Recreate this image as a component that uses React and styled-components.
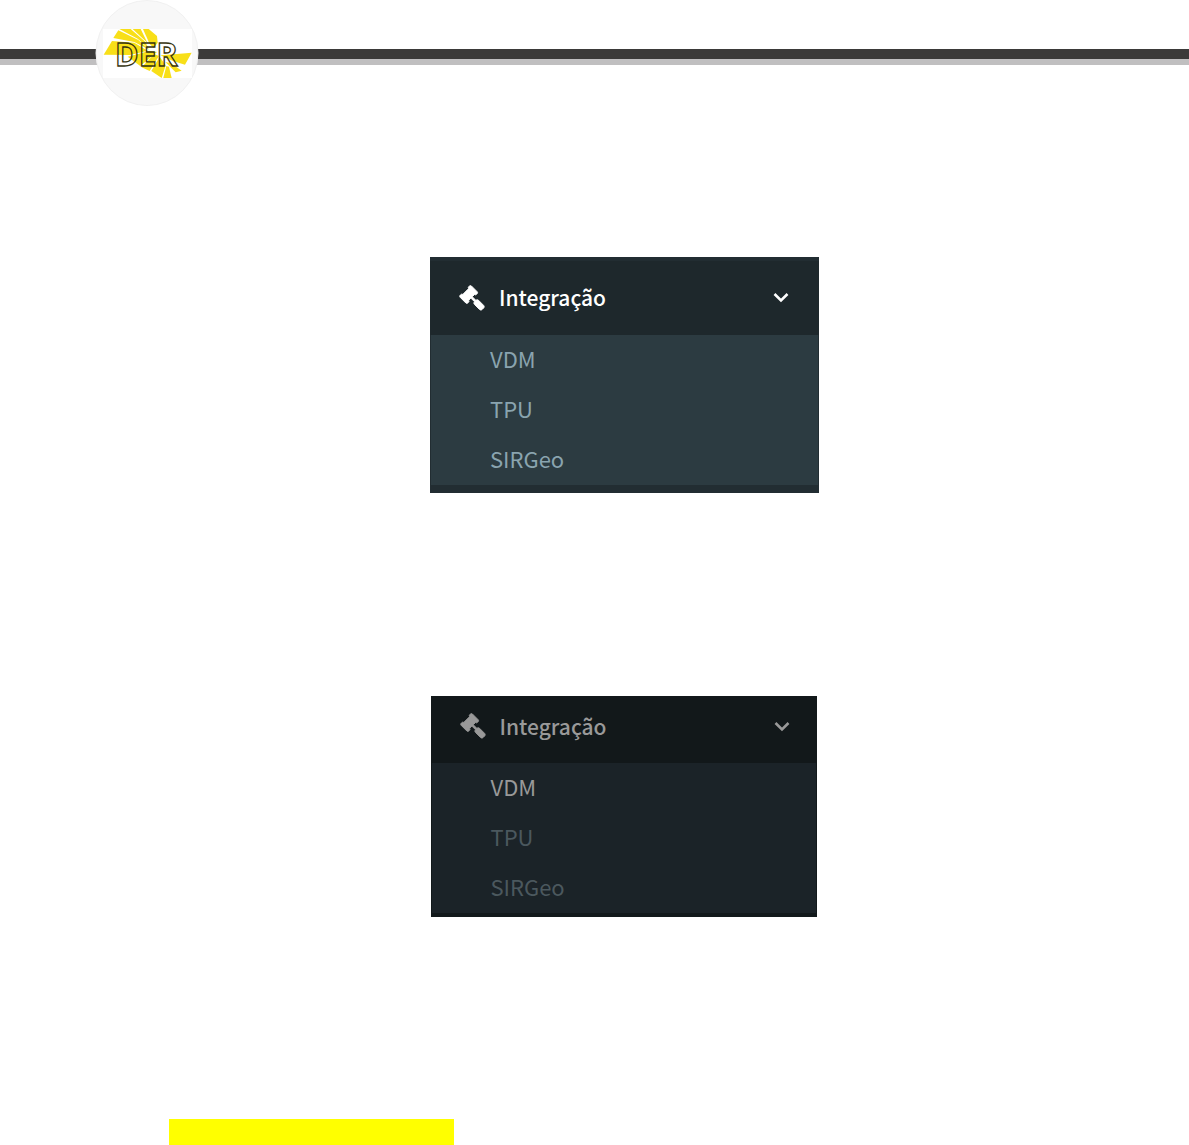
import React, { useState } from "react";
import styled, { createGlobalStyle } from "styled-components";

const GlobalStyle = createGlobalStyle`
  body {
    margin: 0;
    background: #fff;
    font-family: "Noto Sans CJK JP", "Open Sans", sans-serif;
  }
`;

const themes = {
  normal: {
    edge: "#222d32", header: "#1e282c", title: "#ffffff",
    panel: "#2c3b41", item: "#8aa4af", active: "#8aa4af",
  },
  dimmed: {
    edge: "#12191b", header: "#12181a", title: "#999999",
    panel: "#1b2328", item: "#4b585e", active: "#999999",
  },
};

const Header = styled.header`
  display: flex;
  height: 106px;
  padding-left: 95px;
  background: linear-gradient(#fff 49px, #3b3a39 49px, #3b3a39 59px, #c0bfc0 59px, #c0bfc0 65px, #fff 65px);
`;

const Logo = styled.svg`
  width: 104px;
  height: 106px;
`;

const LogoText = styled.text`
  font-family: "Open Sans", "Noto Sans", sans-serif;
  font-size: 32px;
  font-weight: 700;
  fill: none;
  stroke: #37340f;
  stroke-width: 1.3px;
`;

const Main = styled.main`
  display: flex;
  flex-direction: column;
  align-items: center;
  padding-top: 151px;
`;

const Menu = styled.nav`
  box-sizing: border-box;
  width: ${(p) => p.$width}px;
  margin: 0 0 ${(p) => p.$after}px ${(p) => p.$indent}px;
  padding-top: ${(p) => p.$top}px;
  padding-bottom: ${(p) => p.$bottom}px;
  background: ${(p) => p.$tone.edge};
`;

const MenuButton = styled.button`
  display: flex;
  align-items: center;
  width: 100%;
  height: ${(p) => p.$height}px;
  padding: 0 ${(p) => p.$side}px ${(p) => p.$lift}px 29px;
  border: 0;
  background: ${(p) => p.$tone.header};
  color: ${(p) => p.$tone.title};
  font: 500 21px/32px "Noto Sans CJK JP", "Open Sans", sans-serif;
  text-align: left;
  cursor: pointer;
`;

const Title = styled.span`
  flex: 1;
  margin-left: 13px;
  padding-bottom: 2px;
`;

const Items = styled.ul`
  margin: 0 1px;
  padding: 0;
  list-style: none;
  background: ${(p) => p.$tone.panel};
`;

const ItemLink = styled.a`
  display: block;
  padding: 0 0 4px 59px;
  color: ${(p) => (p.$active ? p.$tone.active : p.$tone.item)};
  font-size: 22px;
  line-height: 46px;
  text-decoration: none;
`;

const Highlight = styled.div`
  width: 285px;
  height: 26px;
  margin-left: 169px;
  background: #ffff00;
`;

function GavelIcon() {
  return (
    <svg width="27" height="27" viewBox="-10 0 1912 1912" fill="currentColor" stroke="currentColor" strokeWidth="70" strokeLinejoin="round" aria-hidden="true">
      <path d="M1771 1536q0 53-37 90l-107 108q-39 37-91 37-53 0-90-37l-363-364q-38-36-38-90 0-53 43-96l-256-256-126 126q-14 14-34 14t-34-14q2 2 12.5 12t12.5 13 10 11.5 10 13.5 6 13.5 5.5 16.5 1.5 18q0 38-28 68-3 3-16.5 18t-19 20.5-18.5 16.5-22 15.5-22 9-26 4.5q-40 0-68-28l-408-408q-28-28-28-68 0-13 4.5-26t9-22 15.5-22 16.5-18.5 20.5-19 18-16.5q30-28 68-28 10 0 18 1.5t16.5 5.5 13.5 6 13.5 10 11.5 10 13 12.5 12 12.5q-14-14-14-34t14-34l348-348q14-14 34-14t34 14q-2-2-12.5-12t-12.5-13-10-11.5-10-13.5-6-13.5-5.5-16.5-1.5-18q0-38 28-68 3-3 16.5-18t19-20.5 18.5-16.5 22-15.5 22-9 26-4.5q40 0 68 28l408 408q28 28 28 68 0 13-4.5 26t-9 22-15.5 22-16.5 18.5-20.5 19-18 16.5q-30 28-68 28-10 0-18-1.5t-16.5-5.5-13.5-6-13.5-10-11.5-10-13-12.5-12-12.5q14 14 14 34t-14 34l-126 126 256 256q43-43 96-43 52 0 91 37l363 363q37 39 37 91z" />
    </svg>
  );
}

function ChevronIcon() {
  return (
    <svg width="16" height="12" viewBox="0 0 16 12" fill="none" stroke="currentColor" strokeWidth="2.6" aria-hidden="true">
      <path d="M1.5 2 8 8.4 14.5 2" />
    </svg>
  );
}

function SideMenu({ tone, active, width, indent, top, bottom, height, side, lift, after }) {
  const [open, setOpen] = useState(true);
  return (
    <Menu $tone={tone} $width={width} $indent={indent} $top={top} $bottom={bottom} $after={after} aria-label="Integração">
      <MenuButton
        type="button"
        aria-expanded={open}
        onClick={() => setOpen(!open)}
        $tone={tone}
        $height={height}
        $side={side}
        $lift={lift}
      >
        <GavelIcon />
        <Title>Integração</Title>
        <ChevronIcon />
      </MenuButton>
      {open && (
        <Items $tone={tone}>
          {["VDM", "TPU", "SIRGeo"].map((name) => (
            <li key={name}>
              <ItemLink href={`#${name}`} $tone={tone} $active={name === active}>{name}</ItemLink>
            </li>
          ))}
        </Items>
      )}
    </Menu>
  );
}

export default function App() {
  return (
    <>
      <GlobalStyle />
      <Header>
        <Logo viewBox="95 0 104 106" role="img" aria-label="DER">
          <ellipse cx="147" cy="53" rx="51" ry="52.5" fill="#f8f8f8" stroke="#f1f1f1" />
          <path d="M103 29H192V78H103Z" fill="#fff" />
          <g fill="#f8df18" transform="translate(97 22) scale(0.3333)">
            <path d="M20 98 45 57 112 62 152 86 100 99Z" />
            <path d="M49 48 64 25 124 54 158 84 112 60Z" />
            <path d="M67 21H101L143 58 156 80 122 50Z" />
            <path d="M107 21H131L153 66 146 58Z" />
            <path d="M138 21H155L180 42 182 62 170 78 158 66Z" />
            <path d="M92 104 156 87 180 90 130 132Z" />
            <path d="M134 136 172 96 186 102 158 147Z" />
            <path d="M163 147 188 104 206 130 194 168Z" />
            <path d="M208 132 216 134 224 168H199Z" />
            <path d="M205 120 222 124 254 146 236 151Z" />
            <path d="M190 100 240 96 284 92 264 128 228 117Z" />
          </g>
          <LogoText x="115" y="66">DER</LogoText>
        </Logo>
      </Header>
      <Main>
        <SideMenu tone={themes.normal} width={389} indent={60} top={4} height={74} side={30} lift={0} bottom={8} after={203} />
        <SideMenu tone={themes.dimmed} active="VDM" width={386} indent={58} top={0} height={67} side={27} lift={6} bottom={4} after={202} />
      </Main>
      <Highlight />
    </>
  );
}
